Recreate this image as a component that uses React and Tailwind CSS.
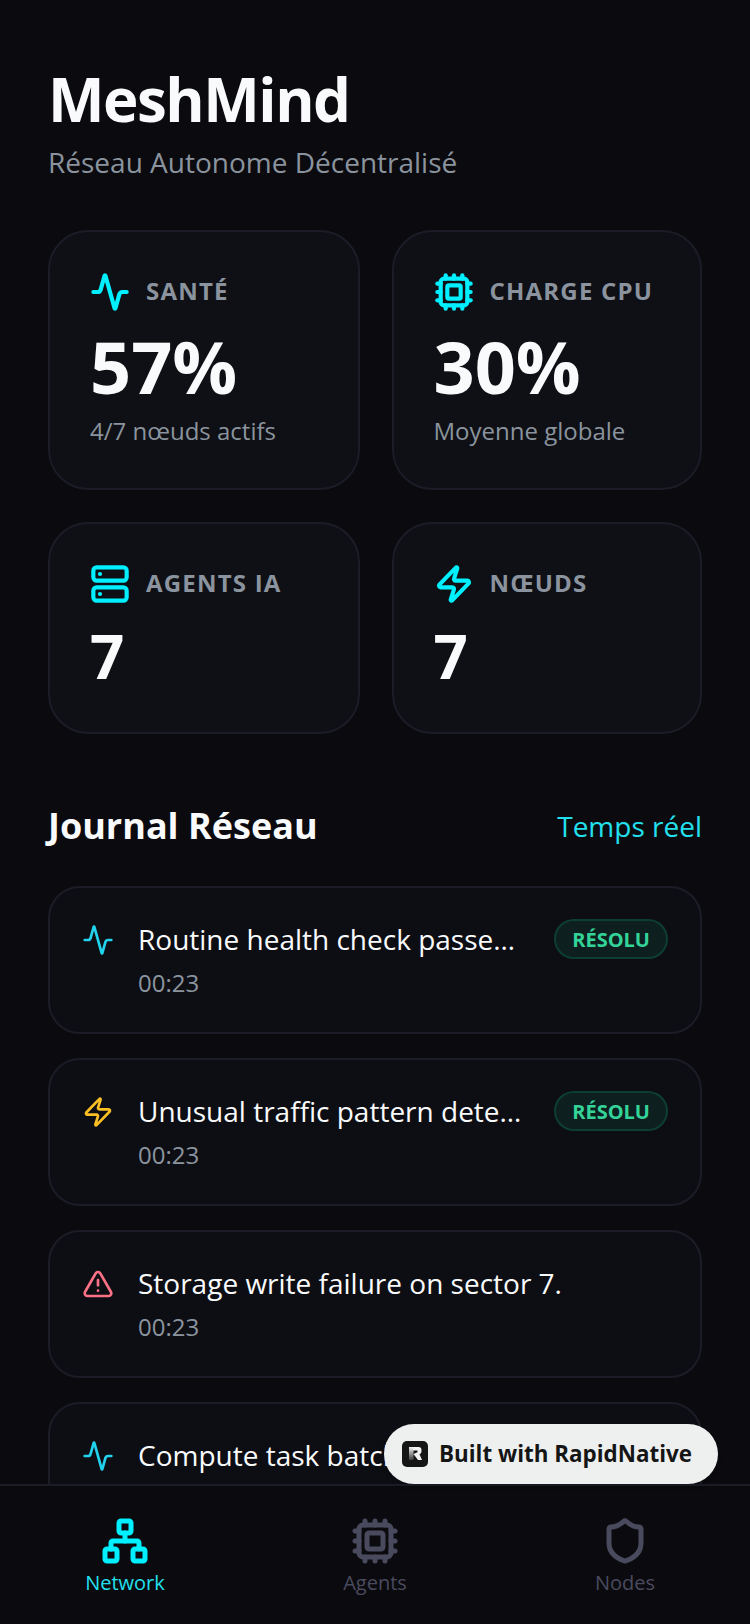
import React from "react";
import { Activity, Cpu, Server, Zap, TriangleAlert, Network, Shield } from "lucide-react";

const stats = [
  { icon: Activity, label: "SANTÉ", value: "57%", sub: "4/7 nœuds actifs" },
  { icon: Cpu, label: "CHARGE CPU", value: "30%", sub: "Moyenne globale" },
  { icon: Server, label: "AGENTS IA", value: "7" },
  { icon: Zap, label: "NŒUDS", value: "7" },
];

const events = [
  { icon: Activity, color: "text-[#22d3ee]", text: "Routine health check passed on all nodes.", resolved: true },
  { icon: Zap, color: "text-[#fbbf24]", text: "Unusual traffic pattern detected in region.", resolved: true },
  { icon: TriangleAlert, color: "text-[#fb7185]", text: "Storage write failure on sector 7." },
  { icon: Activity, color: "text-[#22d3ee]", text: "Compute task batch completed on node.", resolved: true },
];

const tabs = [
  { icon: Network, label: "Network", active: true },
  { icon: Cpu, label: "Agents" },
  { icon: Shield, label: "Nodes" },
];

const StatCard = ({ stat }) => {
  const Icon = stat.icon;
  return (
    <div className="rounded-[40px] border-2 border-[#1c1c27] bg-[#0e1015] p-[40px]">
      <div className="flex items-center gap-[16px]">
        <Icon size={40} strokeWidth={2.5} className="text-[#00f0ff]" />
        <span className="-mt-[3px] text-[24px] leading-[32px] font-bold tracking-[1.2px] text-[#8b949e]">
          {stat.label}
        </span>
      </div>
      {stat.sub ? (
        <>
          <div className="mt-[14px] text-[72px] leading-[80px] font-bold text-[#f9fafb]">{stat.value}</div>
          <div className="mt-[9px] mb-[1px] text-[24px] leading-[32px] text-[#8b949e]">{stat.sub}</div>
        </>
      ) : (
        <div className="mt-[16px] text-[60px] leading-[72px] font-bold text-[#f9fafb]">{stat.value}</div>
      )}
    </div>
  );
};

const EventRow = ({ event }) => {
  const Icon = event.icon;
  return (
    <div className="flex h-[148px] shrink-0 items-start gap-[24px] rounded-[32px] border-2 border-[#1c1c27] bg-[#0d0e14] px-[32px] pt-[31px]">
      <Icon size={32} strokeWidth={2} className={`mt-[5px] shrink-0 ${event.color}`} />
      <div className="min-w-0 flex-1">
        <div className="truncate text-[28px] leading-[40px] text-[#f9fafb]">{event.text}</div>
        <div className="mt-[8px] text-[24px] leading-[32px] text-[#8b949e]">00:23</div>
      </div>
      {event.resolved && (
        <span className="shrink-0 rounded-full border-2 border-[#10b98133] bg-[#10b9811a] px-[16px] pt-[3px] pb-[1px] text-[20px] leading-[32px] font-bold text-[#34d399]">
          RÉSOLU
        </span>
      )}
    </div>
  );
};

export default function App() {
  return (
    <div className="relative flex h-[1624px] w-[750px] flex-col overflow-hidden bg-[#0a0a0f] font-['Open_Sans',sans-serif]">
      <main className="min-h-0 flex-1 overflow-hidden px-[48px] pt-[63px]">
        <h1 className="text-[60px] leading-[72px] font-bold tracking-[-1.5px] text-[#f9fafb]">MeshMind</h1>
        <p className="mt-[7px] text-[28px] leading-[40px] text-[#8b949e]">Réseau Autonome Décentralisé</p>

        <section className="mt-[48px] grid grid-cols-[311.5px_310.5px] gap-[32px]">
          {stats.map((stat) => (
            <StatCard key={stat.label} stat={stat} />
          ))}
        </section>

        <div className="mt-[68px] flex items-center justify-between">
          <h2 className="text-[36px] leading-[48px] font-bold text-[#f9fafb]">Journal Réseau</h2>
          <span className="text-[28px] leading-[40px] text-[#22e0ee]">Temps réel</span>
        </div>

        <section className="mt-[36px] flex flex-col gap-[24px]">
          {events.map((event) => (
            <EventRow key={event.text} event={event} />
          ))}
        </section>
      </main>

      <nav className="flex h-[140px] shrink-0 justify-around border-t-2 border-[#1c1c27] bg-[#0a0a0f] pt-[31px]">
        {tabs.map((tab) => {
          const Icon = tab.icon;
          return (
            <div key={tab.label} className="flex w-[250px] flex-col items-center">
              <Icon size={48} strokeWidth={2.5} className={tab.active ? "text-[#00f0ff]" : "text-[#4a4a5e]"} />
              <span className={`mt-[4px] text-[20px] leading-[28px] ${tab.active ? "text-[#22e0ee]" : "text-[#4a4a5e]"}`}>
                {tab.label}
              </span>
            </div>
          );
        })}
      </nav>

      <div className="absolute top-[1424px] left-[384px] flex h-[60px] w-[334px] items-center gap-[11px] rounded-full bg-[#eef0f0] pb-[1px] pl-[18px] shadow-md">
        <svg width="26" height="26" viewBox="0 0 26 26">
          <defs>
            <linearGradient id="stem" x1="0" y1="0" x2="0" y2="1">
              <stop offset="0" stopColor="#f2f2f2" />
              <stop offset="1" stopColor="#3a3a3a" />
            </linearGradient>
          </defs>
          <rect width="26" height="26" rx="5" fill="#151515" />
          <rect x="7" y="6" width="4.5" height="13" fill="url(#stem)" />
          <path d="M11 6h5.5a3 3 0 0 1 3 3v1.5a3 3 0 0 1-2 2.8L20 19h-4l-4.5-6 4-1.8V9.6H11z" fill="#f2f2f2" />
        </svg>
        <span className="text-[22.4px] leading-[32px] font-bold text-[#151515]">Built with RapidNative</span>
      </div>
    </div>
  );
}
